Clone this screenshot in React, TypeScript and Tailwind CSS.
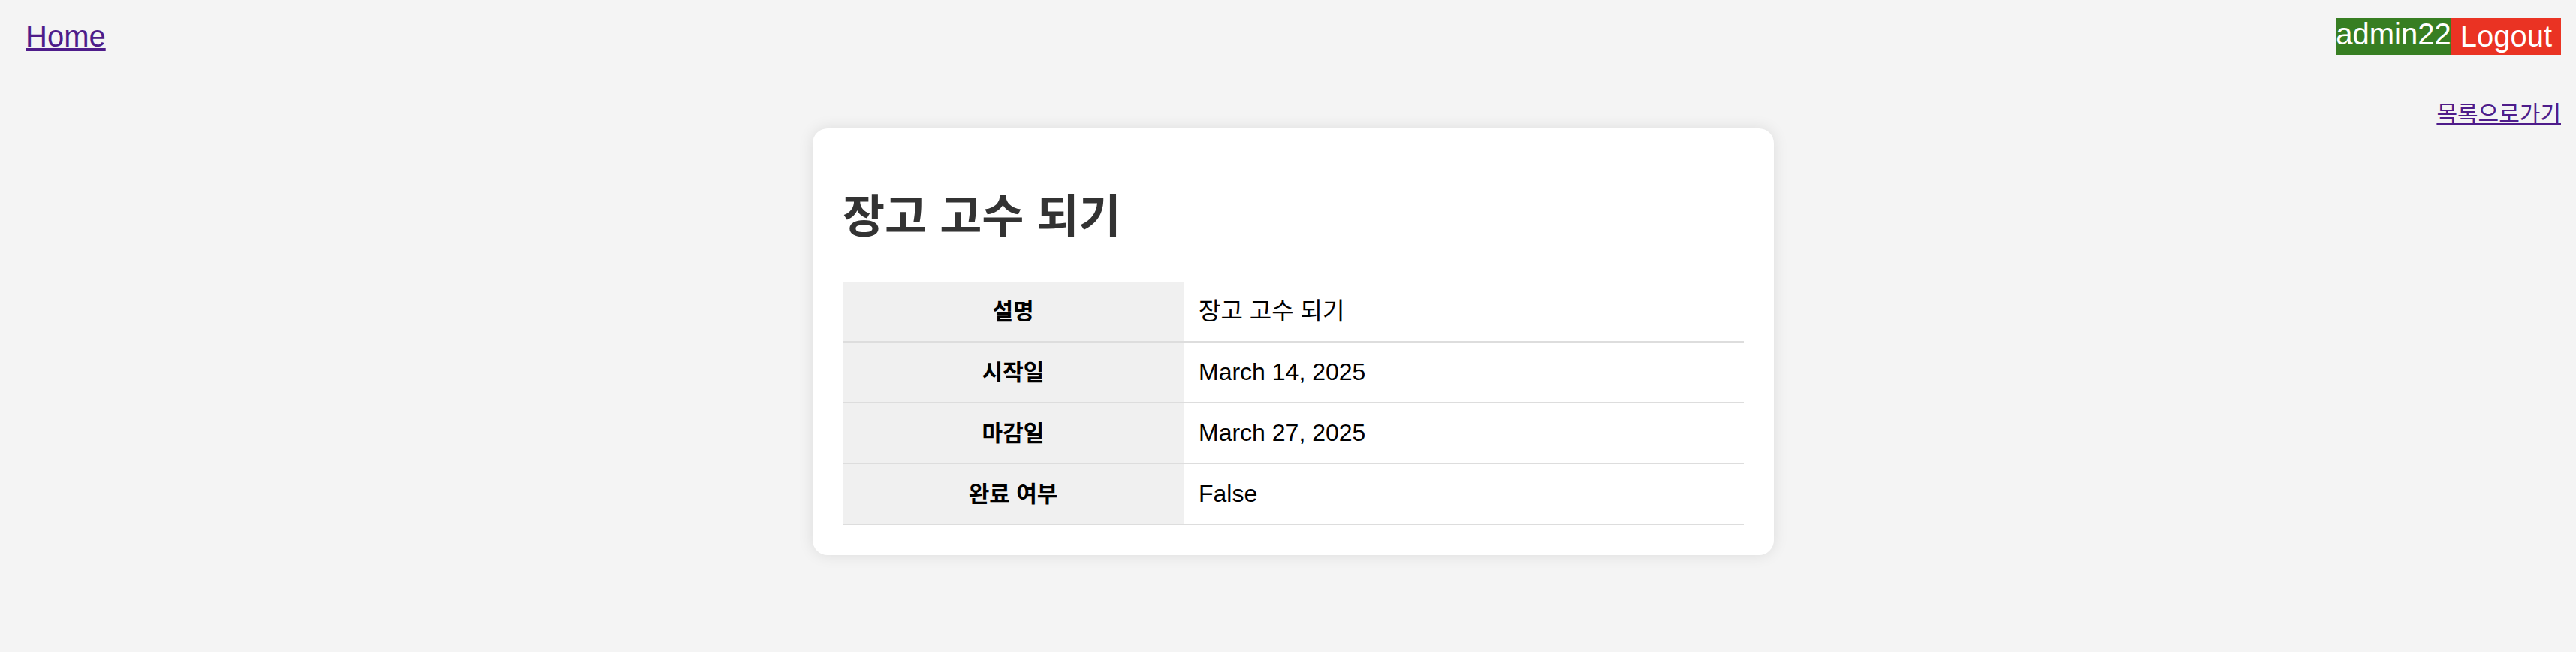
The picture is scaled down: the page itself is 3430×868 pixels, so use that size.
const rows = [
  { label: "설명", value: "장고 고수 되기" },
  { label: "시작일", value: "March 14, 2025" },
  { label: "마감일", value: "March 27, 2025" },
  { label: "완료 여부", value: "False" },
]

export default function App() {
  return (
    <div className="min-h-screen bg-[#f4f4f4] font-['Liberation_Sans','Noto_Sans_CJK_KR',sans-serif] text-black">
      {/* Top nav */}
      <nav className="flex items-start justify-between pl-[34px] pr-[20px] pt-[24px]">
        <a href="#" className="mt-[2px] text-[40px] leading-[44px] text-[#4e1c8a] underline">
          Home
        </a>
        <div className="flex items-start">
          <span className="bg-[#377e22] text-white text-[40px] leading-[42px] pb-[7px]">admin22</span>
          <button className="h-[49px] bg-[#ea3323] px-[12px] text-[40px] leading-[47px] text-white">
            Logout
          </button>
        </div>
      </nav>

      <div className="mt-[63px] pr-[20px] text-right">
        <a href="#" className="text-[30px] leading-[32px] text-[#4e1c8a] underline">
          목록으로가기
        </a>
      </div>

      {/* Detail card */}
      <main className="mt-[2px] flex justify-center pl-[14px]">
        <div className="w-[1280px] rounded-[20px] bg-white px-[40px] pt-[40px] pb-[40px] shadow-[0_0_20px_rgba(0,0,0,0.1)]">
          <h1 className="mt-[48px] mb-[55px] text-[61px] font-bold leading-[61px] text-[#333]">장고 고수 되기</h1>
          <div>
            {rows.map((r) => (
              <div key={r.label} className="grid grid-cols-[454px_1fr] border-b-2 border-[#dddddd]">
                <div className="flex h-[79px] items-center justify-center bg-[#f0f0f0] text-[30px] font-bold leading-[32px]">
                  {r.label}
                </div>
                <div className="flex h-[79px] items-center pl-[20px] text-[32px] leading-[37px]">{r.value}</div>
              </div>
            ))}
          </div>
        </div>
      </main>
    </div>
  )
}
